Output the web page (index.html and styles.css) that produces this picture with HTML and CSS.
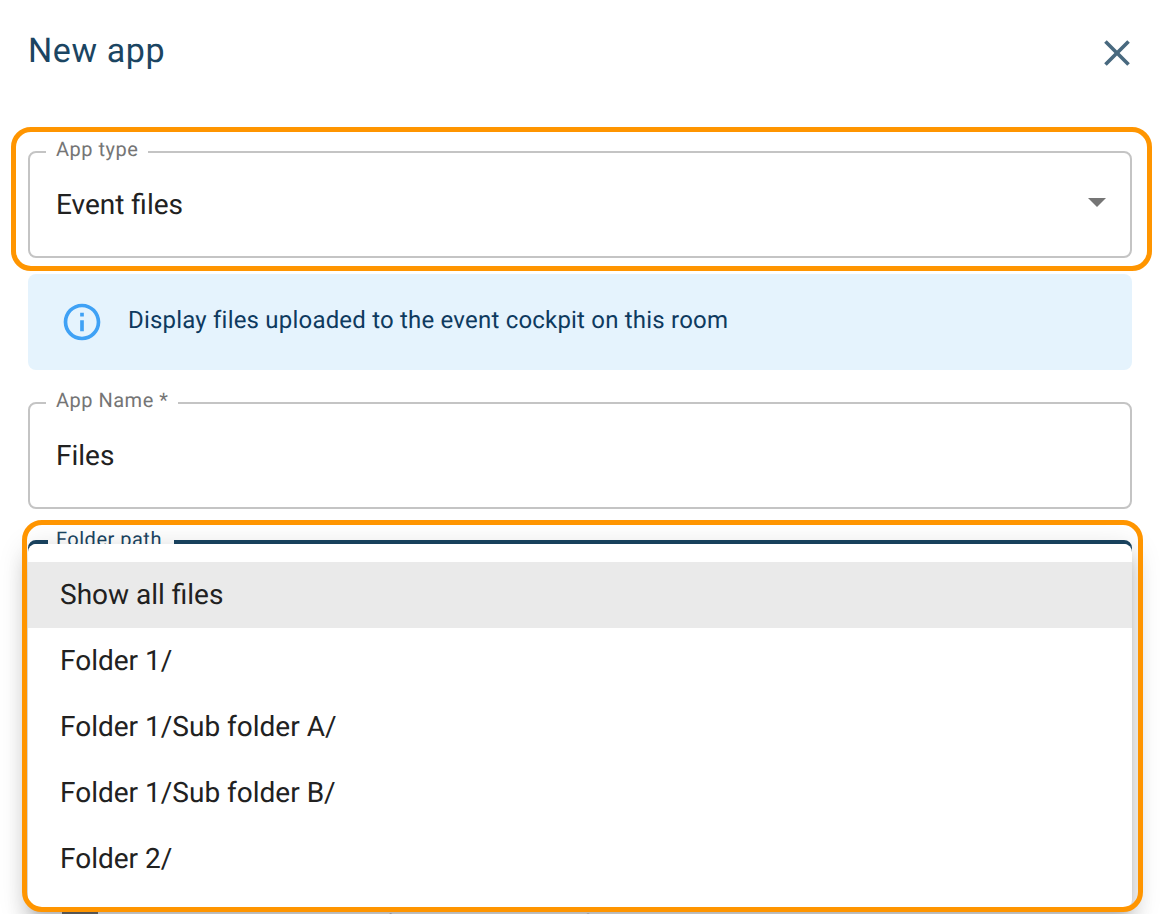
FILE: index.html
```html
<!DOCTYPE html>
<html lang="en">
<head>
  <meta charset="UTF-8">
  <title>New app</title>
  <link rel="stylesheet" href="styles.css">
</head>
<body>
  <div class="dialog">
    <!-- Header -->
    <div class="dialog-head">
      <h2>New app</h2>
      <svg class="close-icon" width="44" height="44" viewBox="0 0 24 24"><path d="M19 6.41 17.59 5 12 10.59 6.41 5 5 6.41 10.59 12 5 17.59 6.41 19 12 13.41 17.59 19 19 17.59 13.41 12z"/></svg>
    </div>

    <!-- App type -->
    <fieldset class="field">
      <legend>App type</legend>
      <span class="field-value">Event files</span>
      <span class="caret"></span>
    </fieldset>

    <div class="info">
      <svg width="44" height="44" viewBox="0 0 24 24"><path d="M11 7h2v2h-2zm0 4h2v6h-2zm1-9C6.48 2 2 6.48 2 12s4.48 10 10 10 10-4.48 10-10S17.52 2 12 2zm0 18c-4.41 0-8-3.59-8-8s3.59-8 8-8 8 3.59 8 8-3.59 8-8 8z"/></svg>
      <span class="info-text">Display files uploaded to the event cockpit on this room</span>
    </div>

    <!-- App name -->
    <fieldset class="field name-field">
      <legend>App Name *</legend>
      <span class="field-value">Files</span>
    </fieldset>

    <!-- Folder path -->
    <fieldset class="field field-focus">
      <legend>Folder path</legend>
    </fieldset>

    <div class="check-row">
      <span class="checkbox"></span>
      <span>Allow the selection of multiple video files</span>
    </div>
  </div>

  <!-- Dropdown -->
  <ul class="menu">
    <li class="selected">Show all files</li>
    <li>Folder 1/</li>
    <li>Folder 1/Sub folder A/</li>
    <li>Folder 1/Sub folder B/</li>
    <li>Folder 2/</li>
  </ul>

  <!-- Annotation boxes -->
  <div class="mark mark-type"></div>
  <div class="mark mark-folder"></div>
</body>
</html>
```

FILE: styles.css
```css
html, body {
  height: 100%;
}

body {
  margin: 0;
  background: #fff;
  color: #212121;
  font-family: Roboto, "Liberation Sans", sans-serif;
  text-rendering: geometricPrecision;
  overflow: hidden;
  position: relative;
}

.dialog {
  padding: 0 28px;
}

.dialog-head {
  height: 139px;
  display: flex;
  justify-content: space-between;
  align-items: flex-start;
}

.dialog-head h2 {
  margin: 30px 0 0;
  font-size: 34px;
  font-weight: 400;
  line-height: 42px;
  letter-spacing: 0.6px;
  color: #1b4562;
}

.close-icon {
  margin: 31px -7px 0 0;
  fill: #48697f;
}

.field {
  position: relative;
  box-sizing: border-box;
  height: 119px;
  margin: 0;
  padding: 0 26px 13px;
  border: 2px solid #c4c4c4;
  border-radius: 8px;
  display: flex;
  align-items: center;
}

.field legend {
  padding: 0 10px 6px;
  margin-left: -10px;
  font-size: 20px;
  line-height: 20px;
  letter-spacing: 0.5px;
  color: #757575;
}

.field-value {
  font-size: 28px;
}

.caret {
  position: absolute;
  right: 24px;
  top: 33px;
  border-left: 9px solid transparent;
  border-right: 9px solid transparent;
  border-top: 9px solid #757575;
}

.info {
  box-sizing: border-box;
  height: 96px;
  margin-top: 16px;
  padding: 0 32px;
  border-radius: 8px;
  background: #e5f3fd;
  color: #0e3a5f;
  font-size: 24px;
  letter-spacing: 0.2px;
  display: flex;
  align-items: center;
  gap: 24px;
}

.info svg {
  fill: #3fa1f5;
}

.info-text {
  margin-bottom: 4px;
}

.name-field {
  margin-top: 20px;
}

.field-focus {
  margin-top: 20px;
  border: 4px solid #1b4562;
}

.field-focus legend {
  padding: 0 12px 6px 8px;
  color: #1b4562;
}

.check-row {
  margin-top: 259px;
  display: flex;
  align-items: center;
  gap: 26px;
  font-size: 28px;
}

.checkbox {
  width: 36px;
  height: 36px;
  margin-left: 34px;
  background: #757575;
  border-radius: 4px;
}

.menu {
  position: absolute;
  left: 28px;
  top: 544px;
  width: 1104px;
  height: 364px;
  box-sizing: border-box;
  margin: 0;
  padding: 18px 0 0;
  list-style: none;
  background: #fff;
  border-radius: 8px;
  font-size: 28px;
  box-shadow: 0 10px 10px -6px rgba(0,0,0,0.2), 0 16px 20px 2px rgba(0,0,0,0.14), 0 6px 28px 4px rgba(0,0,0,0.12);
}

.menu li {
  height: 66px;
  line-height: 66px;
  padding: 0 32px;
}

.menu li.selected {
  background: #eaeaea;
}

.mark {
  position: absolute;
  box-sizing: border-box;
  border: 5px solid #ff9500;
  border-radius: 20px;
}

.mark-type {
  left: 11px;
  top: 127px;
  width: 1141px;
  height: 144px;
}

.mark-folder {
  left: 22px;
  top: 520px;
  width: 1121px;
  height: 392px;
}
```
